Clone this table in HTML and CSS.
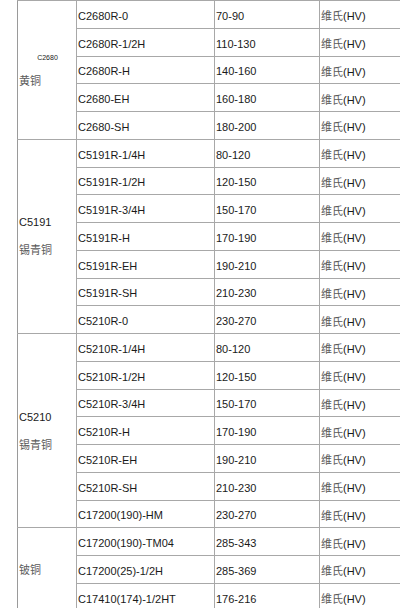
FILE: index.html
```html
<!DOCTYPE html>
<html lang="zh">
<head>
<meta charset="utf-8">
<title>铜材硬度表</title>
<link rel="stylesheet" href="styles.css">
</head>
<body>
<table class="grid">
  <colgroup>
    <col class="c1"><col class="c2"><col class="c3"><col class="c4">
  </colgroup>
  <tbody>
    <tr><td class="group first" rowspan="5"><div class="tiny">C2680</div><div class="cjk">黄铜</div></td><td>C2680R-0</td><td>70-90</td><td class="unit"><span class="cjk">维氏</span>(HV)</td></tr>
    <tr><td>C2680R-1/2H</td><td>110-130</td><td class="unit"><span class="cjk">维氏</span>(HV)</td></tr>
    <tr><td>C2680R-H</td><td>140-160</td><td class="unit"><span class="cjk">维氏</span>(HV)</td></tr>
    <tr><td>C2680-EH</td><td>160-180</td><td class="unit"><span class="cjk">维氏</span>(HV)</td></tr>
    <tr><td>C2680-SH</td><td>180-200</td><td class="unit"><span class="cjk">维氏</span>(HV)</td></tr>

    <tr><td class="group" rowspan="7"><div class="line">C5191</div><div class="line cjk">锡青铜</div></td><td>C5191R-1/4H</td><td>80-120</td><td class="unit"><span class="cjk">维氏</span>(HV)</td></tr>
    <tr><td>C5191R-1/2H</td><td>120-150</td><td class="unit"><span class="cjk">维氏</span>(HV)</td></tr>
    <tr><td>C5191R-3/4H</td><td>150-170</td><td class="unit"><span class="cjk">维氏</span>(HV)</td></tr>
    <tr><td>C5191R-H</td><td>170-190</td><td class="unit"><span class="cjk">维氏</span>(HV)</td></tr>
    <tr><td>C5191R-EH</td><td>190-210</td><td class="unit"><span class="cjk">维氏</span>(HV)</td></tr>
    <tr><td>C5191R-SH</td><td>210-230</td><td class="unit"><span class="cjk">维氏</span>(HV)</td></tr>
    <tr><td>C5210R-0</td><td>230-270</td><td class="unit"><span class="cjk">维氏</span>(HV)</td></tr>

    <tr><td class="group" rowspan="7"><div class="line">C5210</div><div class="line cjk">锡青铜</div></td><td>C5210R-1/4H</td><td>80-120</td><td class="unit"><span class="cjk">维氏</span>(HV)</td></tr>
    <tr><td>C5210R-1/2H</td><td>120-150</td><td class="unit"><span class="cjk">维氏</span>(HV)</td></tr>
    <tr><td>C5210R-3/4H</td><td>150-170</td><td class="unit"><span class="cjk">维氏</span>(HV)</td></tr>
    <tr><td>C5210R-H</td><td>170-190</td><td class="unit"><span class="cjk">维氏</span>(HV)</td></tr>
    <tr><td>C5210R-EH</td><td>190-210</td><td class="unit"><span class="cjk">维氏</span>(HV)</td></tr>
    <tr><td>C5210R-SH</td><td>210-230</td><td class="unit"><span class="cjk">维氏</span>(HV)</td></tr>
    <tr><td>C17200(190)-HM</td><td>230-270</td><td class="unit"><span class="cjk">维氏</span>(HV)</td></tr>

    <tr><td class="group" rowspan="3"><div class="line cjk">铍铜</div></td><td>C17200(190)-TM04</td><td>285-343</td><td class="unit"><span class="cjk">维氏</span>(HV)</td></tr>
    <tr><td>C17200(25)-1/2H</td><td>285-369</td><td class="unit"><span class="cjk">维氏</span>(HV)</td></tr>
    <tr><td>C17410(174)-1/2HT</td><td>176-216</td><td class="unit"><span class="cjk">维氏</span>(HV)</td></tr>
  </tbody>
</table>
</body>
</html>
```

FILE: styles.css
```css
html, body {
  margin: 0;
  padding: 0;
  background: #ffffff;
  overflow: hidden;
}

body {
  font-family: "Liberation Sans", Arial, "Noto Sans CJK SC", sans-serif;
  font-size: 11px;
  color: #1a1a1a;
}

.grid {
  margin-left: 17px;
  border-collapse: collapse;
  table-layout: fixed;
  width: 383px;
}

.c1 { width: 59px; }
.c2 { width: 138px; }
.c3 { width: 105px; }
.c4 { width: 81px; }

.grid tr {
  height: 27.75px;
}

.grid td {
  border: 1px solid #a8a8a8;
  padding: 4px 0 0 1px;
  vertical-align: middle;
  white-space: nowrap;
  overflow: hidden;
  line-height: 13px;
}

.grid td.unit {
  border-right: none;
}

.grid td.group {
  padding: 0 0 0 1px;
  border-left-color: #9a9a9a;
}

.grid td.group.first {
  padding-top: 8px;
}

.cjk {
  font-family: "Noto Sans CJK SC", sans-serif;
  color: #5a5a5a;
  font-weight: 400;
}

.tiny {
  font-size: 7px;
  line-height: 10px;
  text-align: center;
  margin-bottom: 4px;
}

.line {
  line-height: 27px;
}

.group .cjk {
  line-height: 27px;
}
```
